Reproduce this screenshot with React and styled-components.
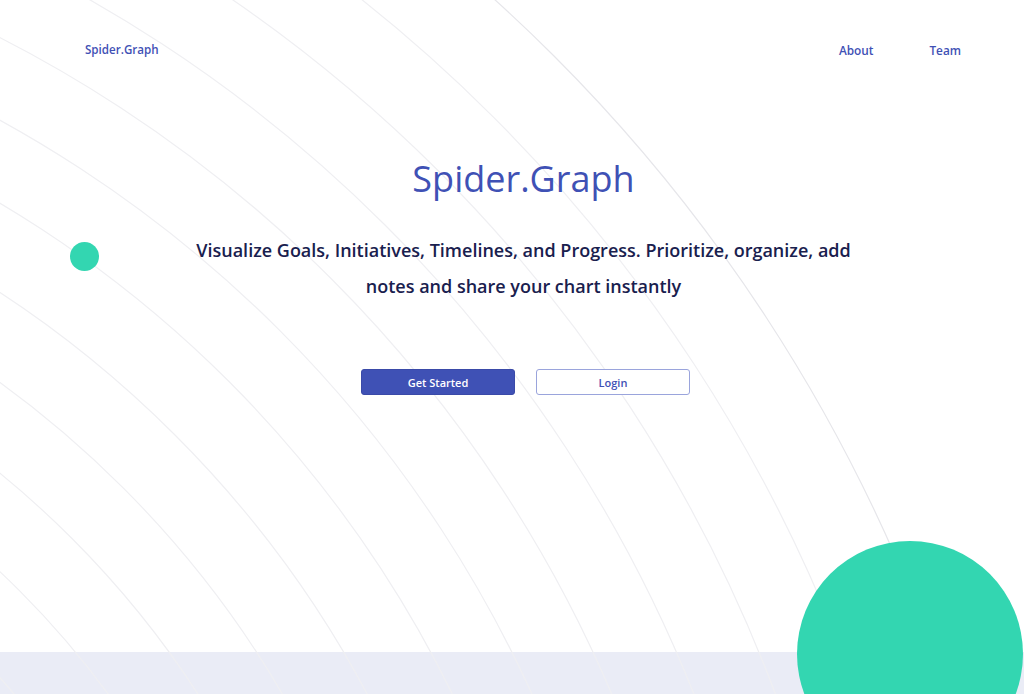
import React from "react";
import styled, { createGlobalStyle } from "styled-components";

const GlobalStyle = createGlobalStyle`
  html, body {
    margin: 0;
    padding: 0;
    background: #ffffff;
  }

  body {
    font-family: "Open Sans", "Noto Sans", sans-serif;
  }

  * {
    box-sizing: border-box;
  }
`;

const Page = styled.div`
  position: relative;
  display: flex;
  flex-direction: column;
  height: 100vh;
  overflow: hidden;
  background: #ffffff;
`;

const Header = styled.header`
  position: relative;
  z-index: 2;
  display: flex;
  align-items: center;
  justify-content: space-between;
  padding: 41px 63px 0 85px;
`;

const Logo = styled.a`
  font-size: 11.6px;
  font-weight: 600;
  line-height: 18px;
  color: #3f51b5;
  text-decoration: none;
`;

const Nav = styled.nav`
  display: flex;
  gap: 56px;
`;

const NavLink = styled.a`
  font-size: 11.8px;
  font-weight: 600;
  line-height: 18px;
  color: #3f51b5;
  text-decoration: none;
  cursor: pointer;
`;

const Hero = styled.section`
  position: relative;
  z-index: 2;
  display: flex;
  flex-direction: column;
  align-items: center;
  padding: 0 0 0 23px;
  margin-top: 95px;
  text-align: center;
`;

const Title = styled.h1`
  margin: 0;
  font-size: 36px;
  font-weight: 400;
  line-height: 49px;
  color: #3f51b5;
`;

const Subtitle = styled.p`
  max-width: 680px;
  margin: 29px 0 0;
  font-size: 18px;
  font-weight: 600;
  line-height: 36px;
  color: #19204e;
`;

const Actions = styled.div`
  display: flex;
  gap: 21px;
  margin: 65px 0 0 4px;
`;

const Button = styled.button`
  width: 154px;
  height: 26px;
  padding: 0;
  border-radius: 3px;
  border: 1px solid ${(props) => (props.primary ? "#3a4aa8" : "#9aa4dc")};
  background: ${(props) => (props.primary ? "#3f51b5" : "#ffffff")};
  color: ${(props) => (props.primary ? "#ffffff" : "#3f51b5")};
  font-family: "Open Sans", "Noto Sans", sans-serif;
  font-size: 11px;
  font-weight: 600;
  cursor: pointer;
`;

const Band = styled.div`
  margin-top: auto;
  height: 42px;
  flex-shrink: 0;
  background: #eaecf6;
`;

const Arcs = styled.svg`
  position: absolute;
  top: 0;
  left: 0;
  width: 1024px;
  height: 694px;
  pointer-events: none;
`;

const Blob = styled.div`
  position: absolute;
  z-index: 1;
  top: ${(props) => props.top}px;
  left: ${(props) => props.left}px;
  width: ${(props) => props.size}px;
  height: ${(props) => props.size}px;
  border-radius: 50%;
  background: #33d6b1;
`;

const radii = [802, 876, 950, 1022, 1096, 1172, 1244, 1317, 1393, 1469, 1546, 1632];

function App() {
    return (
        <Page>
            <GlobalStyle />

            <Arcs viewBox="0 0 1024 694">
                {radii.map((r, i) => (
                    <circle
                        key={r}
                        cx={-600}
                        cy={1210}
                        r={r}
                        fill="none"
                        stroke={i === radii.length - 1 ? "#e6e6ea" : "#efeff2"}
                        strokeWidth="1.2"
                    />
                ))}
            </Arcs>

            <Blob top={242} left={70} size={29} />
            <Blob top={541} left={797} size={226} />

            <Header>
                <Logo>Spider.Graph</Logo>
                <Nav>
                    <NavLink>About</NavLink>
                    <NavLink>Team</NavLink>
                </Nav>
            </Header>

            <Hero>
                <Title>Spider.Graph</Title>
                <Subtitle>
                    Visualize Goals, Initiatives, Timelines, and Progress. Prioritize,
                    organize, add notes and share your chart instantly
                </Subtitle>
                <Actions>
                    <Button primary>Get Started</Button>
                    <Button>Login</Button>
                </Actions>
            </Hero>

            <Band />
        </Page>
    );
}

export default App;
